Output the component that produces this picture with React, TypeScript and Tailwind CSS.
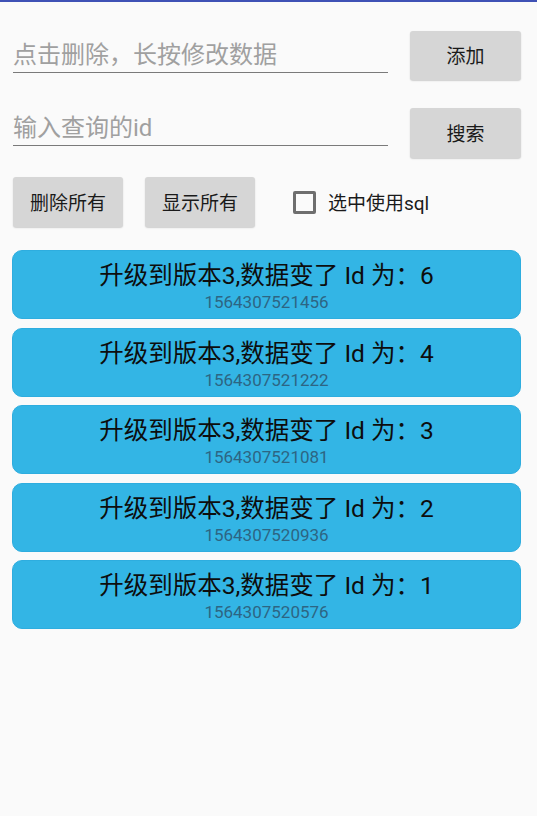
import React from "react";

const records = [
  { id: 6, time: "1564307521456" },
  { id: 4, time: "1564307521222" },
  { id: 3, time: "1564307521081" },
  { id: 2, time: "1564307520936" },
  { id: 1, time: "1564307520576" },
];

const font = { fontFamily: '"Roboto", "Noto Sans CJK SC", sans-serif' };

const GrayButton = ({ label, className = "" }: { label: string; className?: string }) => (
  <button
    className={`bg-[#d6d6d6] rounded-[3px] shadow-[0_1px_1.5px_rgba(0,0,0,0.18)] text-[19px] text-[#1a1a1a] pt-[4px] ${className}`}
  >
    {label}
  </button>
);

const App = () => {
  return (
    <div className="min-h-screen bg-[#fafafa]" style={font}>
      {/* top bar */}
      <div className="h-[2px] bg-[#3f51b5]"></div>

      <div className="pl-[13px] pr-[16px]">
        {/* add row */}
        <div className="flex items-start mt-[29px]">
          <input
            className="mt-[6px] w-[375px] h-[36px] bg-transparent outline-none border-b-[1.5px] border-[#7a7a7a] text-[24px] placeholder:text-[#a0a0a0]"
            placeholder="点击删除，长按修改数据"
          />
          <GrayButton label="添加" className="ml-auto w-[111px] h-[49px]" />
        </div>

        {/* search row */}
        <div className="flex items-start mt-[28px]">
          <input
            className="mt-[2px] w-[375px] h-[36px] bg-transparent outline-none border-b-[1.5px] border-[#7a7a7a] text-[24px] placeholder:text-[#a0a0a0]"
            placeholder="输入查询的id"
          />
          <GrayButton label="搜索" className="ml-auto w-[111px] h-[50px]" />
        </div>

        {/* actions row */}
        <div className="flex items-center mt-[19px] h-[50px]">
          <GrayButton label="删除所有" className="w-[110px] h-[50px]" />
          <GrayButton label="显示所有" className="ml-[22px] w-[110px] h-[50px]" />
          <label className="flex items-center ml-[38px] pt-[1px]">
            <span className="w-[23px] h-[23px] border-[3px] border-[#6e6e6e] rounded-[2px]"></span>
            <span className="ml-[12px] pt-[3px] text-[19px] text-[#1a1a1a]">选中使用sql</span>
          </label>
        </div>
      </div>

      {/* record list */}
      <div className="flex flex-col gap-[8.5px] mt-[23px] pl-[12px] pr-[16px]">
        {records.map((r) => (
          <div
            key={r.id}
            className="h-[69px] rounded-[10px] bg-[#33b5e5] border border-[#2eaddf] flex flex-col items-center pt-[11px]"
          >
            <div className="text-[24.5px] leading-[28px] text-[#0d0d0d]">
              升级到版本3,数据变了 Id 为：{r.id}
            </div>
            <div className="mt-[2px] text-[17px] leading-[20px] text-[#2d6583]">{r.time}</div>
          </div>
        ))}
      </div>
    </div>
  );
};

export default App;
